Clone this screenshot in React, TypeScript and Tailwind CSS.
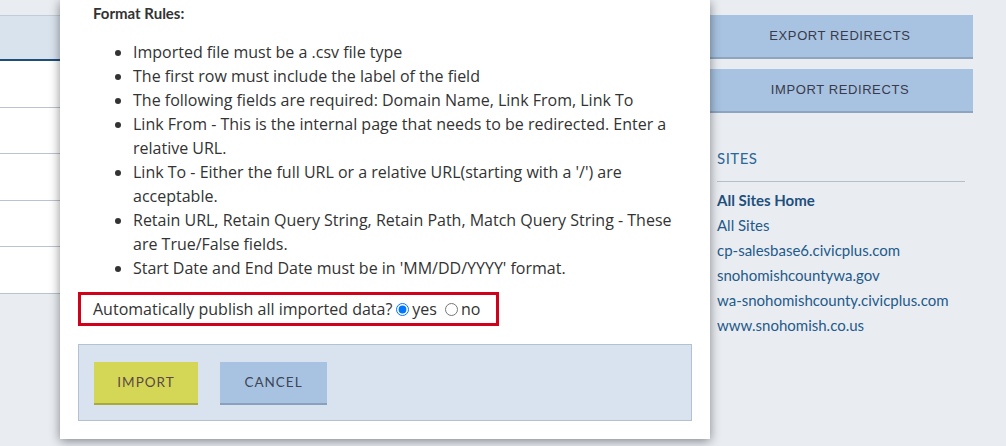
import React from "react"

const rules = [
  "Imported file must be a .csv file type",
  "The first row must include the label of the field",
  "The following fields are required: Domain Name, Link From, Link To",
  "Link From - This is the internal page that needs to be redirected. Enter a relative URL.",
  "Link To - Either the full URL or a relative URL(starting with a '/') are acceptable.",
  "Retain URL, Retain Query String, Retain Path, Match Query String - These are True/False fields.",
  "Start Date and End Date must be in 'MM/DD/YYYY' format.",
]

const sites = [
  "cp-salesbase6.civicplus.com",
  "snohomishcountywa.gov",
  "wa-snohomishcounty.civicplus.com",
  "www.snohomish.co.us",
]

function ImportModal() {
  return (
    <div className="absolute left-[60px] top-0 w-[650px] bg-white px-[18px] pt-[1px] pb-[18px] shadow-[0_2px_10px_rgba(0,0,0,0.45)]">
      <p className="pl-[15px] font-['Lato',sans-serif] text-[15px] font-bold leading-[24px] text-[#333]">Format Rules:</p>

      <ul className="mt-[15px] list-disc pl-[55px] pr-[4px] font-['Open_Sans',sans-serif] text-[16px] leading-[24px] text-[#333]">
        {rules.map((rule) => (
          <li key={rule}>{rule}</li>
        ))}
      </ul>

      <div className="mt-[12px] inline-flex items-center border-[3px] border-[#d0021b] py-[2px] pl-[12px] pr-[16px] font-['Open_Sans',sans-serif] text-[16px] leading-[24px] text-[#333]">
        <span>Automatically publish all imported data?</span>
        <label className="flex items-center">
          <input type="radio" name="publish" defaultChecked className="ml-[4px] mr-[3px] h-[13px] w-[13px] accent-[#0075ff]" />
          <span>yes</span>
        </label>
        <label className="ml-[8px] flex items-center">
          <input type="radio" name="publish" className="mr-[3px] h-[13px] w-[13px]" />
          <span>no</span>
        </label>
      </div>

      <div className="mt-[18px] flex gap-[22px] border border-[#b3c2d3] bg-[#d9e3ef] px-[15px] pt-[17px] pb-[15px]">
        <button className="h-[43px] w-[104px] border-b-2 border-[#a8ab3c] bg-[#d4d655] text-[13.5px] tracking-[1px] text-[#5c4848]">
          IMPORT
        </button>
        <button className="h-[43px] w-[107px] border-b-2 border-[#8aa1bd] bg-[#a7c3e1] text-[13.5px] tracking-[1px] text-[#3d4656]">
          CANCEL
        </button>
      </div>
    </div>
  )
}

export default function App() {
  return (
    <div className="relative flex h-[446px] w-[1006px] overflow-hidden bg-[#e9edf2] font-['Lato',sans-serif]">
      <div className="w-[690px] pt-[15px]">
        <div className="h-[46px] border-t border-[#c3ccd6] border-b-2 border-b-[#1c4f7b] bg-[#d9e3ee]" />
        {[0, 1, 2, 3, 4].map((i) => (
          <div key={i} className="h-[46.6px] border-b border-[#b9c4d0] bg-white" />
        ))}
      </div>

      <aside className="ml-[17px] w-[266px] pt-[15px]">
        <button className="block h-[44px] w-full border-b-2 border-[#8ea5c0] bg-[#a7c3e1] font-['Liberation_Sans',sans-serif] text-[13px] tracking-[0.6px] text-[#3a3a4a]">
          EXPORT REDIRECTS
        </button>
        <button className="mt-[10px] block h-[44px] w-full border-b-2 border-[#8ea5c0] bg-[#a7c3e1] font-['Liberation_Sans',sans-serif] text-[13px] tracking-[0.6px] text-[#3a3a4a]">
          IMPORT REDIRECTS
        </button>

        <div className="ml-[10px] mr-[8px] mt-[34px]">
          <h2 className="border-b border-[#b4bfcb] pb-[11px] text-[15px] tracking-[0.5px] text-[#2b6797]">SITES</h2>
          <ul className="mt-[6px] text-[15px] leading-[25px] text-[#245a8a]">
            <li className="font-bold text-[#1f4f7c]">All Sites Home</li>
            <li>All Sites</li>
            {sites.map((site) => (
              <li key={site}>{site}</li>
            ))}
          </ul>
        </div>
      </aside>

      <ImportModal />
    </div>
  )
}
